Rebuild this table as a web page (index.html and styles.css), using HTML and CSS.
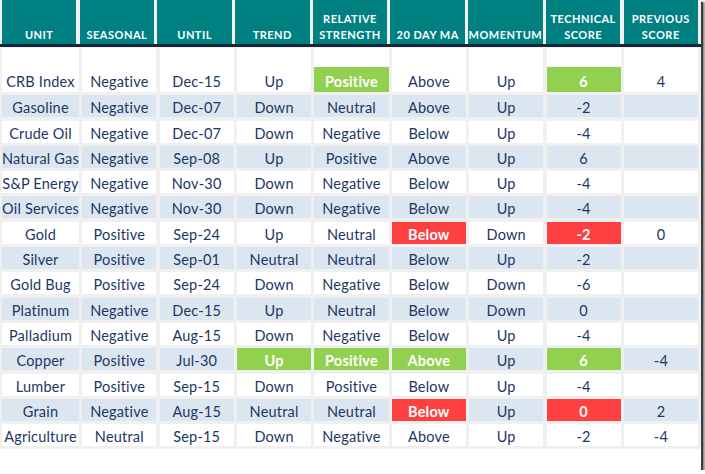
FILE: index.html
```html
<!DOCTYPE html>
<html>
<head>
<meta charset="utf-8">
<link rel="stylesheet" href="styles.css">
</head>
<body>
<div class="frame">
  <div class="sheet">
    <div class="grid head">
      <div class="hc">UNIT</div>
      <div class="hc">SEASONAL</div>
      <div class="hc">UNTIL</div>
      <div class="hc">TREND</div>
      <div class="hc">RELATIVE<br>STRENGTH</div>
      <div class="hc">20 DAY MA</div>
      <div class="hc">MOMENTUM</div>
      <div class="hc">TECHNICAL<br>SCORE</div>
      <div class="hc">PREVIOUS<br>SCORE</div>
    </div>
    <div class="rule"></div>
    <div class="grid body">
      <div class="c tall"><span class="band">CRB Index</span></div>
      <div class="c tall"><span class="band">Negative</span></div>
      <div class="c tall"><span class="band">Dec-15</span></div>
      <div class="c tall"><span class="band">Up</span></div>
      <div class="c tall"><span class="band g">Positive</span></div>
      <div class="c tall"><span class="band">Above</span></div>
      <div class="c tall"><span class="band">Up</span></div>
      <div class="c tall"><span class="band g">6</span></div>
      <div class="c tall"><span class="band">4</span></div>

      <div class="c alt">Gasoline</div><div class="c alt">Negative</div><div class="c alt">Dec-07</div><div class="c alt">Down</div><div class="c alt">Neutral</div><div class="c alt">Above</div><div class="c alt">Up</div><div class="c alt">-2</div><div class="c alt"></div>

      <div class="c">Crude Oil</div><div class="c">Negative</div><div class="c">Dec-07</div><div class="c">Down</div><div class="c">Negative</div><div class="c">Below</div><div class="c">Up</div><div class="c">-4</div><div class="c"></div>

      <div class="c alt">Natural Gas</div><div class="c alt">Negative</div><div class="c alt">Sep-08</div><div class="c alt">Up</div><div class="c alt">Positive</div><div class="c alt">Above</div><div class="c alt">Up</div><div class="c alt">6</div><div class="c alt"></div>

      <div class="c">S&amp;P Energy</div><div class="c">Negative</div><div class="c">Nov-30</div><div class="c">Down</div><div class="c">Negative</div><div class="c">Below</div><div class="c">Up</div><div class="c">-4</div><div class="c"></div>

      <div class="c alt">Oil Services</div><div class="c alt">Negative</div><div class="c alt">Nov-30</div><div class="c alt">Down</div><div class="c alt">Negative</div><div class="c alt">Below</div><div class="c alt">Up</div><div class="c alt">-4</div><div class="c alt"></div>

      <div class="c">Gold</div><div class="c">Positive</div><div class="c">Sep-24</div><div class="c">Up</div><div class="c">Neutral</div><div class="c r">Below</div><div class="c">Down</div><div class="c r">-2</div><div class="c">0</div>

      <div class="c alt">Silver</div><div class="c alt">Positive</div><div class="c alt">Sep-01</div><div class="c alt">Neutral</div><div class="c alt">Neutral</div><div class="c alt">Below</div><div class="c alt">Up</div><div class="c alt">-2</div><div class="c alt"></div>

      <div class="c">Gold Bug</div><div class="c">Positive</div><div class="c">Sep-24</div><div class="c">Down</div><div class="c">Negative</div><div class="c">Below</div><div class="c">Down</div><div class="c">-6</div><div class="c"></div>

      <div class="c alt">Platinum</div><div class="c alt">Negative</div><div class="c alt">Dec-15</div><div class="c alt">Up</div><div class="c alt">Neutral</div><div class="c alt">Below</div><div class="c alt">Down</div><div class="c alt">0</div><div class="c alt"></div>

      <div class="c">Palladium</div><div class="c">Negative</div><div class="c">Aug-15</div><div class="c">Down</div><div class="c">Negative</div><div class="c">Below</div><div class="c">Up</div><div class="c">-4</div><div class="c"></div>

      <div class="c alt">Copper</div><div class="c alt">Positive</div><div class="c alt">Jul-30</div><div class="c g">Up</div><div class="c g">Positive</div><div class="c g">Above</div><div class="c alt">Up</div><div class="c g">6</div><div class="c alt">-4</div>

      <div class="c">Lumber</div><div class="c">Positive</div><div class="c">Sep-15</div><div class="c">Down</div><div class="c">Positive</div><div class="c">Below</div><div class="c">Up</div><div class="c">-4</div><div class="c"></div>

      <div class="c alt">Grain</div><div class="c alt">Negative</div><div class="c alt">Aug-15</div><div class="c alt">Neutral</div><div class="c alt">Neutral</div><div class="c r">Below</div><div class="c alt">Up</div><div class="c r">0</div><div class="c alt">2</div>

      <div class="c">Agriculture</div><div class="c">Neutral</div><div class="c">Sep-15</div><div class="c">Down</div><div class="c">Negative</div><div class="c">Above</div><div class="c">Up</div><div class="c">-2</div><div class="c">-4</div>
    </div>
  </div>
  <div class="foot"></div>
</div>
</body>
</html>
```

FILE: styles.css
```css
html, body {
  margin: 0;
  padding: 0;
  background: #ffffff;
}

.frame {
  width: 701px;
  height: 470px;
  background: #ffffff;
  box-shadow: 2px 2px 0 #3c3c3c, 3px 3px 2px 1px #8a8a8a;
  display: flex;
  flex-direction: column;
  overflow: hidden;
}

.sheet {
  background: #f0f0f0;
  padding: 0 3px 3.3px 2px;
  display: flex;
  flex-direction: column;
}

.grid {
  display: grid;
  grid-template-columns: repeat(9, 1fr);
  column-gap: 3.3px;
}

.head {
  height: 44px;
}

.hc {
  background: #008080;
  color: #ffffff;
  font-family: Lato, "Liberation Sans", sans-serif;
  font-weight: 700;
  font-size: 11px;
  letter-spacing: 0.5px;
  line-height: 16px;
  text-align: center;
  display: flex;
  align-items: flex-end;
  justify-content: center;
  padding-bottom: 1px;
  box-sizing: border-box;
}

.rule {
  height: 3px;
  background: #17283b;
  margin: 0 -3px 1px -2px;
}

.body {
  grid-template-rows: 44px repeat(14, 22px);
  row-gap: 3.3px;
}

.c {
  background: #ffffff;
  color: #1c3763;
  font-family: Lato, "Liberation Sans", sans-serif;
  font-size: 14.5px;
  letter-spacing: 0.2px;
  line-height: 25px;
  height: 22px;
  text-align: center;
  white-space: nowrap;
  overflow: visible;
}

.c.tall {
  height: 44px;
  display: flex;
  flex-direction: column;
  justify-content: flex-end;
}

.band {
  display: block;
  height: 25px;
  line-height: 29px;
}

.alt {
  background: #dce6f1;
}

.g {
  background: #92d050;
  color: #ffffff;
  font-weight: 700;
}

.r {
  background: #ff4040;
  color: #ffffff;
  font-weight: 700;
}

.foot {
  flex: 1;
  background: #ffffff;
}
```
